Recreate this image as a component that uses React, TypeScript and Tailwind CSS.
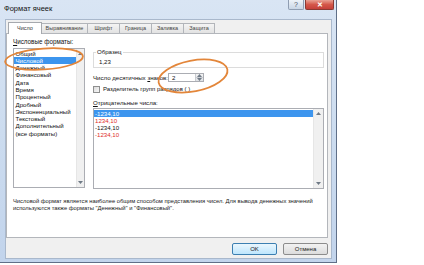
const formats = [
  'Общий',
  'Числовой',
  'Денежный',
  'Финансовый',
  'Дата',
  'Время',
  'Процентный',
  'Дробный',
  'Экспоненциальный',
  'Текстовый',
  'Дополнительный',
  '(все форматы)',
];

const negatives = [
  { text: '-1234,10', red: false, selected: true },
  { text: '1234,10', red: true, selected: false },
  { text: '-1234,10', red: false, selected: false },
  { text: '-1234,10', red: true, selected: false },
];

const tabs = [
  { label: 'Число', width: 'w-[34px]' },
  { label: 'Выравнивание', width: 'w-[47px]' },
  { label: 'Шрифт', width: 'w-[33px]' },
  { label: 'Граница', width: 'w-[33px]' },
  { label: 'Заливка', width: 'w-[33px]' },
  { label: 'Защита', width: 'w-[32px]' },
];

function Arrow({ down = false }: { down?: boolean }) {
  return (
    <svg width="5" height="3" viewBox="0 0 5 3">
      <path d={down ? 'M0 0h5L2.5 3z' : 'M0 3h5L2.5 0z'} fill="#6f7a86" />
    </svg>
  );
}

function ScrollBar({ width }: { width: string }) {
  return (
    <div className={`${width} h-full bg-[#f0f0f0] border-l border-[#e6e6e6] flex flex-col items-center justify-between py-[3px]`}>
      <Arrow />
      <Arrow down />
    </div>
  );
}

export default function App() {
  return (
    <div className="relative w-[424px] h-[265px] bg-white overflow-hidden font-['Liberation_Sans',Arial,sans-serif] text-[#111]">
      <div className="w-[337px] h-[263px] flex flex-col border-r border-b border-[#5f6f88] bg-gradient-to-b from-[#d9e5f4] via-[#ccdcef] to-[#c2d4ec]">
        {/* title bar */}
        <div className="h-[19px] flex items-start justify-between pr-[2px]">
          <span className="pl-[4px] pt-[5px] text-[7.5px] leading-[8px]">Формат ячеек</span>
          <div className="flex gap-[1px]">
            <div className="w-[16px] h-[10px] rounded-b-[2px] border border-t-0 border-[#8f9db2] bg-gradient-to-b from-[#eef3f9] to-[#c9d6e6] flex items-center justify-center text-[7px] leading-none text-[#4a5565]">
              ?
            </div>
            <div className="w-[29px] h-[10px] rounded-b-[2px] border border-t-0 border-[#8a3a33] bg-gradient-to-b from-[#e8a195] via-[#d4574a] to-[#c5403a] flex items-center justify-center text-[7px] leading-none font-bold text-white">
              ✕
            </div>
          </div>
        </div>

        {/* client area */}
        <div className="ml-[5px] mr-[4px] mb-[3px] flex-1 flex flex-col bg-[#f0f0f0] border border-[#a9b8cc]">
          {/* tabs */}
          <div className="mt-[2px] ml-[2px] h-[11px] flex items-end">
            {tabs.map((tab, i) =>
              i === 0 ? (
                <div
                  key={tab.label}
                  className={`${tab.width} relative z-10 -mb-[1px] h-[12px] bg-white border border-b-0 border-[#a6a9ae] flex items-center justify-center text-[5.5px] text-[#333]`}
                >
                  {tab.label}
                </div>
              ) : (
                <div
                  key={tab.label}
                  className={`${tab.width} h-[10px] -ml-[1px] bg-gradient-to-b from-[#f4f4f4] to-[#e2e2e2] border border-b-0 border-[#b2b5ba] flex items-center justify-center text-[5.5px] text-[#444]`}
                >
                  {tab.label}
                </div>
              ),
            )}
          </div>

          {/* tab panel */}
          <div className="ml-0 mr-[3px] h-[205px] bg-white border border-[#b3b6bb] pl-[6px] pr-[3px] flex flex-col">
            <div className="flex gap-[8px]">
              {/* left column */}
              <div className="w-[72px] pt-[4px] flex flex-col">
                <div className="text-[6.3px] leading-[8px]">
                  <span className="underline">Ч</span>исловые форматы:
                </div>
                <div className="mt-[2px] h-[140px] border border-[#abadb3] flex">
                  <div className="flex-1 pt-[0.5px]">
                    {formats.map((f, i) => (
                      <div
                        key={f}
                        className={`h-[7.3px] leading-[7.3px] pl-[1.5px] text-[6.1px] whitespace-nowrap ${
                          i === 1 ? 'bg-[#3c95ee] text-white' : ''
                        }`}
                      >
                        {f}
                      </div>
                    ))}
                  </div>
                  <ScrollBar width="w-[8px]" />
                </div>
              </div>

              {/* right column */}
              <div className="flex-1 pt-[14px] flex flex-col">
                <fieldset className="h-[20px] border border-[#dcdcdc] pl-[5px] pb-[1px]">
                  <legend className="-ml-[3px] px-[1px] text-[6.1px] leading-[8px]">Образец</legend>
                  <div className="pt-[2px] text-[6.1px] leading-[8px]">1,23</div>
                </fieldset>

                <div className="mt-[5px] h-[9px] flex items-center">
                  <span className="w-[75px] text-[6.1px] leading-[8px] whitespace-nowrap">
                    Число десятичных <span className="underline">з</span>наков:
                  </span>
                  <div className="w-[36px] h-[9px] border border-[#abadb3] bg-white flex">
                    <span className="flex-1 pl-[3px] text-[6.1px] leading-[7px]">2</span>
                    <div className="w-[8px] flex flex-col border-l border-[#c9ccd1] bg-gradient-to-b from-[#f3f3f3] to-[#dfe2e6]">
                      <div className="flex-1 flex items-center justify-center border-b border-[#c9ccd1]">
                        <Arrow />
                      </div>
                      <div className="flex-1 flex items-center justify-center">
                        <Arrow down />
                      </div>
                    </div>
                  </div>
                </div>

                <div className="mt-[4px] h-[7px] flex items-center gap-[3px]">
                  <div className="w-[7px] h-[7px] border border-[#8e8f8f] bg-gradient-to-br from-[#dcdcdc] to-[#f7f7f7]" />
                  <span className="text-[6px] leading-[7px] whitespace-nowrap">
                    Разделитель групп разрядов ( )
                  </span>
                </div>

                <div className="mt-[6px] text-[6.1px] leading-[8px]">
                  <span className="underline">О</span>трицательные числа:
                </div>
                <div className="mt-[1px] h-[81px] border border-[#abadb3] flex">
                  <div className="flex-1 pt-[0.5px]">
                    {negatives.map((n, i) => (
                      <div
                        key={i}
                        className={`h-[7.2px] leading-[7.2px] pl-[1px] text-[6.1px] ${
                          n.selected ? 'bg-[#3c95ee] text-white' : n.red ? 'text-[#e0302c]' : ''
                        }`}
                      >
                        {n.text}
                      </div>
                    ))}
                  </div>
                  <ScrollBar width="w-[10px]" />
                </div>
              </div>
            </div>

            <div className="mt-[9px] text-[5.8px] leading-[7px] text-[#222]">
              Числовой формат является наиболее общим способом представления чисел. Для вывода денежных значений
              <br />
              используются также форматы "Денежный" и "Финансовый".
            </div>
          </div>

          {/* buttons */}
          <div className="mt-[5px] mr-[3px] flex justify-end gap-[6px]">
            <button className="w-[45px] h-[12px] rounded-[2px] border border-[#3c7fb1] bg-gradient-to-b from-[#eaf6fd] to-[#bee6fd] text-[6px] leading-none text-[#222]">
              OK
            </button>
            <button className="w-[45px] h-[12px] rounded-[2px] border border-[#8c8c8c] bg-gradient-to-b from-[#f2f2f2] to-[#dcdcdc] text-[6px] leading-none text-[#222]">
              Отмена
            </button>
          </div>
        </div>
      </div>

      {/* hand-drawn annotation ellipses */}
      <svg className="absolute left-0 top-0 pointer-events-none" width="424" height="265">
        <ellipse cx="44" cy="59" rx="39" ry="10.5" transform="rotate(-4 44 59)" fill="none" stroke="#e3863a" strokeWidth="1.8" />
        <ellipse cx="193" cy="76" rx="35" ry="15.5" transform="rotate(-11 193 76)" fill="none" stroke="#e3863a" strokeWidth="1.8" />
      </svg>
    </div>
  );
}
